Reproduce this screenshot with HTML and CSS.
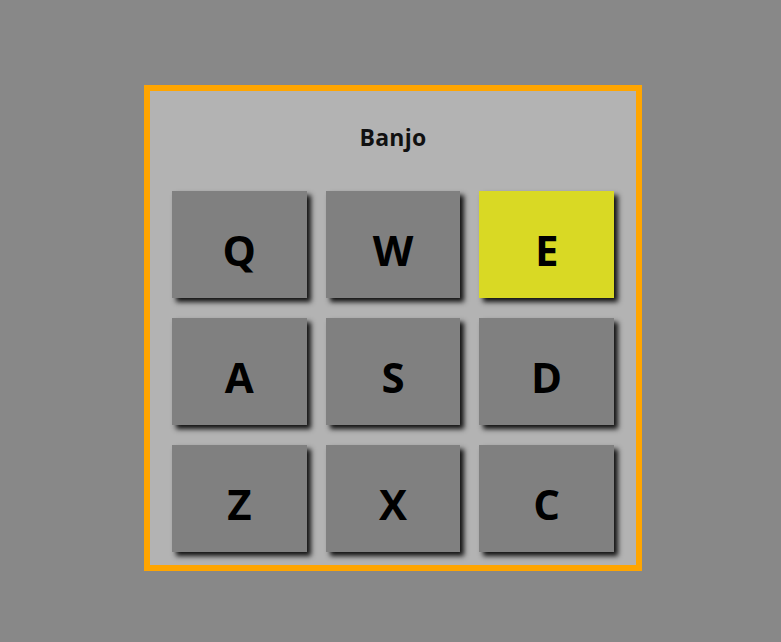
FILE: index.html
```html
<!DOCTYPE html>
<html>
<head>
<meta charset="utf-8">
<link rel="stylesheet" href="styles.css">
</head>
<body>
<div class="panel">
  <div class="title">Banjo</div>
  <div class="keys">
    <div class="key">Q</div>
    <div class="key">W</div>
    <div class="key active">E</div>
    <div class="key">A</div>
    <div class="key">S</div>
    <div class="key">D</div>
    <div class="key">Z</div>
    <div class="key">X</div>
    <div class="key">C</div>
  </div>
</div>
</body>
</html>
```
FILE: styles.css
```css
html, body {
  margin: 0;
  padding: 0;
  background: #888888;
  width: 781px;
  height: 642px;
  font-family: "Open Sans", "Noto Sans", sans-serif;
}
body {
  padding-top: 85px;
  padding-left: 144px;
  box-sizing: border-box;
}
.panel {
  width: 498px;
  height: 486px;
  box-sizing: border-box;
  border: 6px solid #ffa500;
  background: #b3b3b3;
  padding: 0 22px 13px 22px;
}
.title {
  padding-top: 32px;
  height: 28px;
  line-height: 28px;
  text-align: center;
  font-weight: 700;
  font-size: 23px;
  letter-spacing: 0.3px;
  color: #111;
  margin-bottom: 40px;
}
.keys {
  display: grid;
  grid-template-columns: repeat(3, 1fr);
  grid-auto-rows: 107px;
  column-gap: 19px;
  row-gap: 20px;
}
.key {
  background: #808080;
  box-shadow: 4px 4px 5px rgba(0, 0, 0, 0.9);
  display: flex;
  align-items: center;
  justify-content: center;
  padding-top: 10px;
  box-sizing: border-box;
  font-weight: 700;
  font-size: 42px;
  color: #000;
}
.key.active {
  background: #d9d924;
}
```
